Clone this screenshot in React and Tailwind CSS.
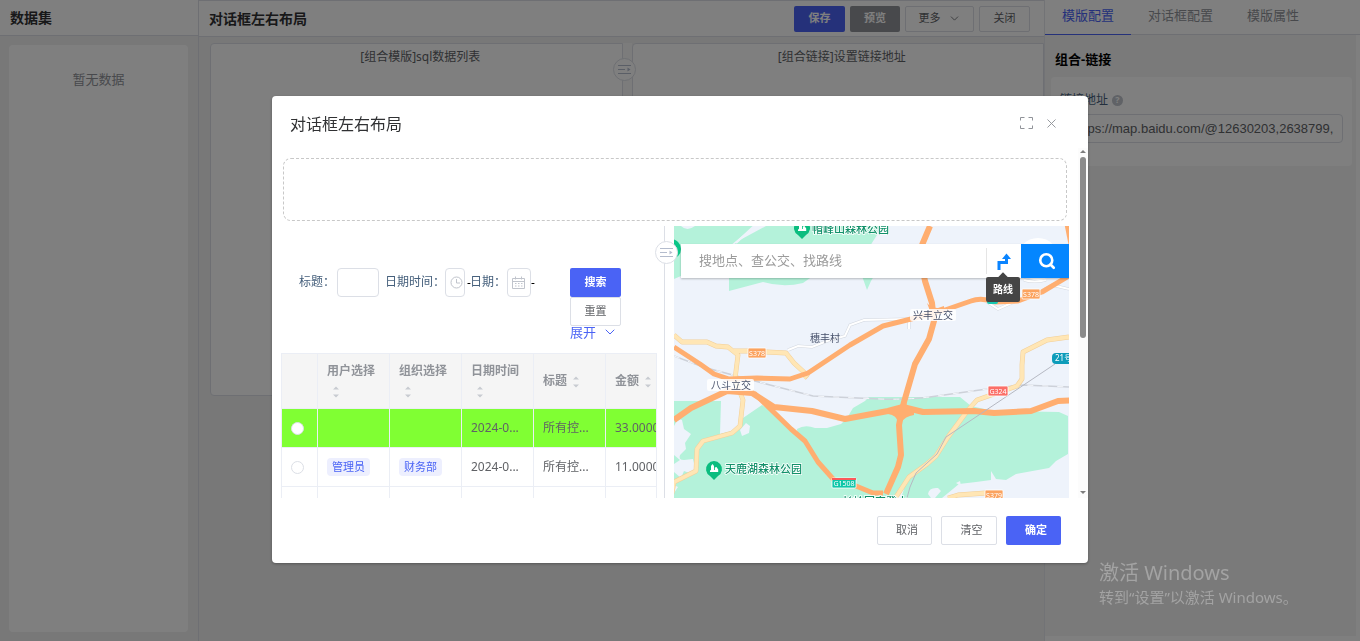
import React, { useState } from "react";
import { ChevronDown, Search, X } from "lucide-react";

const tabs = ["模版配置", "对话框配置", "模版属性"];

const columns = ["用户选择", "组织选择", "日期时间", "标题", "金额"];

const rows = [
  { id: 1, user: "", org: "", date: "2024-0...", title: "所有控...", amount: "33.0000", active: true },
  { id: 2, user: "管理员", org: "财务部", date: "2024-0...", title: "所有控...", amount: "11.0000" },
  { id: 3, user: "", org: "", date: "", title: "", amount: "" },
];

function SplitToggle() {
  return (
    <button
      aria-label="折叠"
      className="absolute top-[15px] -left-[10px] z-10 flex size-[23px] items-center justify-center rounded-full border border-[#dcdfe6] bg-white"
    >
      <svg width="13" height="11" viewBox="0 0 13 11" fill="none" stroke="#b4bccd">
        <path d="M0 1.500h13M0 5.500h7M0 9.500h13" />
        <path d="M9.500 3.500v4L12.500 5.500z" fill="#b4bccd" stroke="none" />
      </svg>
    </button>
  );
}

function SortCaret() {
  return (
    <span className="inline-flex h-5 w-[18px] items-center justify-center align-middle">
      <svg width="6" height="12" viewBox="0 0 6 12" fill="#c8cbd1">
        <path d="M0 3.500 3 0.500l3 3zM0 8.500h6l-3 3z" />
      </svg>
    </span>
  );
}

function ClockIcon() {
  return (
    <svg width="13" height="13" viewBox="0 0 13 13" fill="none" stroke="#c0c4cc">
      <circle cx="6.5" cy="6.5" r="5.500" />
      <path d="M6.500 3v4H10" />
    </svg>
  );
}

function CalendarIcon() {
  return (
    <svg width="13" height="13" viewBox="0 0 13 13" fill="none" stroke="#c0c4cc">
      <path d="M.5 2.500h12v10H.5zM.5 5.500h12M3.500.5v3M9.500.5v3M3 7.500h1.500M6 7.500h1.500M9 7.500h1.500M3 10h1.500M6 10h1.500M9 10h1.500" />
    </svg>
  );
}

function Shield({ x, y, w, fill, children }) {
  return (
    <g>
      <rect x={x} y={y} width={w} height="10" rx="1" fill={fill} stroke="#fff" strokeWidth="0.8" />
      <text x={x + w / 2} y={y + 7.6} fontSize="7" fill="#fff" textAnchor="middle">
        {children}
      </text>
    </g>
  );
}

function Pin({ x, y }) {
  return (
    <g transform={`translate(${x} ${y})`}>
      <path d="M0 11 -4 7A8 8 0 1 1 4 7z" fill="#0bbd7f" />
      <path d="M-4 3V1.500l1-.5v-4l1.500-2L0-3v4h.8v-2.500L2.500-2 4.200.5V3z" fill="#fff" />
    </g>
  );
}

const streets =
  "m114 124 10-4 14 1 15-6 18-5 5-11 14-5 45-1M235 93v10M313 76l11 7 16-7M364 67l14-8 17 4M350 54q10 3 22 0";

const rail = "m0 130 29 11 67 18 43 11 67 3q30 1 57-3l50-7 36-4 46 2";

const yellowRoads =
  "m0 109 8 7h25l9 4 12 1 10 8-3 24 8 21-3 26-8 7-29 8-6 8-1 22-22 11-2 11-4 10M60 125l14 0 38 2 8 10 13 12-3 3M395 111l-22 3-24 12-1 13 0 14-5 7-40 14-9 10-20 27-12 19-9 8-18 13-13 20M274 272l10-3 28-2";

function MapCanvas() {
  return (
    <svg className="block h-full w-full" viewBox="0 0 395 272" preserveAspectRatio="xMinYMin slice" fill="none">
      <rect width="395" height="272" fill="#eef3fb" />

      {/* parks */}
      <g fill="#b4f2da">
        <path d="M0 0h7q6 6 14 0h59L56 20H7v30L0 53zM58 20 66 14 92 0h112l-1 9-7 11z" />
        <path d="M55 50v15l34-9q20 6 40 1l10-7zM188 50l5 14 4-9 3-5z" />
        <path d="M0 175h47l-1 33 20-5 3-11 19-13 16 10 20 22-1-8q8-5 18-1h12l14-4 6-6 6-10 12-7 4-4h91l11 9 22 5 66 1 9 4v38l-12 7-7 7-33 6-10 6-10-1-5-8v9l-15 2-17 2-17 14H0z" />
      </g>
      <g fill="#eef3fb">
        <path d="M0 200q4-8 8-6l2 9 7 5-6 9 1 6-6 6q-2 5 4 5l9-1 2 9-3 6-8-3-3 7-7-6v-8l6-4-6-5zM66 204l6-7 4 3-1 7-7 3zM0 259l4 2-4 6z" />
        <path d="M222 272l4-10 4 1-3 9zM254 268q1-7 10-6l3 3-6 7h-4zM282 257l4-2 1 5z" />
      </g>

      {/* small streets and railway */}
      <path d={streets} stroke="#d2d7df" strokeWidth="3" />
      <path d={streets} stroke="#fff" strokeWidth="2" />
      <path d="M62 17 80 0" stroke="#eef3fb" strokeWidth="2" />
      <path d={rail} stroke="#cdd1d9" strokeWidth="1.500" />
      <path d={rail} stroke="#f4f6fa" strokeWidth="1" strokeDasharray="6 9" />

      {/* yellow roads */}
      <path d={yellowRoads} stroke="#f2cf98" strokeWidth="4.800" strokeLinejoin="round" />
      <path d={yellowRoads} stroke="#ffe6b5" strokeWidth="3.800" strokeLinejoin="round" />

      {/* highways */}
      <g stroke="#ffae70" strokeLinejoin="round">
        <path strokeWidth="5" d="m0 121 26 17 14 10 15 5 28-1 33 1 18-6 42-28 33-19 28-7 34-9 26-9q10-4 24 1l23-1 24-9 30-18" />
        <path strokeWidth="6" d="m0 194 17-12 36-17 25 2 22 14 38 4 33 8 43-8 15-4 20 5 51-1 20 2 37-2 27-10 46-2" />
        <path strokeWidth="5" d="m80 167 37 36 14 12 13 21 16 18 22 6 17 7h10" />
        <path strokeWidth="6" d="m212 268 12-27 3-12-2-30 3-15 2-8 11-38 14-25 5-18-2-18-7-22-2-10M248 19l8-19" />
        <path strokeWidth="5" d="m393-2 4 20" />
      </g>
      <path d="M217 183q8-1 12-7h3q0 6 8 7v6q-9 1-13 8h-3q-1-8-10-9z" fill="#ffae70" />
      <path d="M253 77q4 5 11 5l6-2v5l-12 5z" fill="#ffae70" />
      <path d="m381 138-109 73-9 17-21 19-6 14-3 11" stroke="#b5b8c2" strokeWidth="1" />

      <circle cx="364" cy="33" r="21" fill="#fff" />
      <rect x="313" y="70" width="11" height="8" rx="2" fill="#17c7b1" />
      <circle cx="-3" cy="23" r="10" fill="#0ac687" />

      {/* labels */}
      <Pin x={128} y={2} />
      <Pin x={40} y={243} />
      <rect x="236" y="83" width="46" height="12" rx="2" fill="#fff" fillOpacity="0.85" />
      <rect x="33" y="153" width="47" height="12" rx="2" fill="#fff" fillOpacity="0.85" />
      <g fontSize="10" fill="#46506a" textAnchor="middle">
        <text x="151" y="116">穗丰村</text>
        <text x="259" y="93">兴丰立交</text>
        <text x="57" y="163">八斗立交</text>
      </g>
      <g fontSize="11" fontWeight="500" fill="#12916a" stroke="#fff" strokeWidth="1.500" paintOrder="stroke">
        <text x="138" y="7">帽峰山森林公园</text>
        <text x="51" y="247">天鹿湖森林公园</text>
        <text x="168" y="280">长岭国家登山</text>
      </g>

      <Shield x={74} y={122} w={18} fill="#fba35f">S378</Shield>
      <Shield x={348} y={63} w={18} fill="#fba35f">S378</Shield>
      <Shield x={314} y={160} w={20} fill="#fb6f68">G324</Shield>
      <Shield x={311} y={264} w={18} fill="#fba35f">S379</Shield>
      <Shield x={158} y={252} w={24} fill="#0fc7a8">G1508</Shield>
      <path d="M158 252h24v2h-24z" fill="#fb5a5a" />
      <rect x="378" y="127" width="26" height="11" rx="4" fill="#0d9cba" />
      <text x="381" y="135" fontSize="8" fill="#fff">21号</text>
    </svg>
  );
}

function MapPanel() {
  return (
    <div className="relative min-w-0 flex-1 overflow-hidden">
      <MapCanvas />
      <div className="absolute top-[18px] right-0 left-[7px] flex h-[34px] bg-white shadow-[0_1px_2px_rgba(0,0,0,0.25)]">
        <input
          aria-label="搜索地图"
          placeholder="搜地点、查公交、找路线"
          className="min-w-0 flex-1 pl-[18px] text-[13px] placeholder:text-[#9b9b9b] focus:outline-none"
        />
        <button aria-label="路线" className="my-1 flex w-[35px] items-center justify-center border-l border-[#e5e5e5]">
          <svg width="14" height="17" viewBox="0 0 14 17" fill="none">
            <path d="M2 17V9.500h7.500V4" stroke="#0a84ff" strokeWidth="3" />
            <path d="M5 6 9.500.5 14 6z" fill="#0a84ff" />
          </svg>
        </button>
        <button aria-label="搜索" className="flex w-12 items-center justify-center bg-[#0486ff] pl-1 text-white">
          <Search size={18} strokeWidth={3.5} />
        </button>
      </div>
      <div className="absolute top-[51px] right-[49px] flex h-[25px] w-[34px] items-center justify-center rounded-xs bg-[#454545] text-[10px] font-bold text-white">
        <span className="absolute -top-[3px] size-2 rotate-45 bg-[#454545]" />
        <span className="relative">路线</span>
      </div>
    </div>
  );
}

function SearchForm() {
  return (
    <form className="flex h-[85px] items-start pl-[18px] text-xs text-[#46607c]">
      <label htmlFor="title" className="w-[38px] leading-[28px]">标题：</label>
      <input id="title" className="h-[29px] w-[42px] rounded-sm border border-[#dcdfe6] px-2" />

      <label htmlFor="datetime" className="ml-[6px] w-[60px] leading-[28px]">日期时间：</label>
      <div className="relative">
        <input id="datetime" className="h-[29px] w-5 rounded-sm border border-[#dcdfe6]" />
        <span className="pointer-events-none absolute top-2 left-[5px]"><ClockIcon /></span>
      </div>
      <span className="w-[5px] pl-[2px] leading-[29px] text-black">-</span>

      <label htmlFor="date" className="w-[37px] leading-[28px]">日期：</label>
      <div className="relative">
        <input id="date" className="h-[29px] w-6 rounded-sm border border-[#dcdfe6]" />
        <span className="pointer-events-none absolute top-2 left-[5px]"><CalendarIcon /></span>
      </div>
      <span className="leading-[29px] text-black">-</span>

      <div className="mr-[43px] ml-auto flex w-[51px] flex-col">
        <button type="button" className="h-[29px] rounded-xs bg-[#4a63f5] text-[11px] font-bold text-white">搜索</button>
        <button type="button" className="h-[29px] rounded-xs border border-[#dcdfe6] bg-white text-[11px] text-[#606266]">重置</button>
        <button type="button" className="flex h-3 items-center gap-[6px] text-[13px] leading-3 text-[#4a63f5]">
          展开 <ChevronDown size={16} strokeWidth={1.5} className="shrink-0" />
        </button>
      </div>
    </form>
  );
}

function DataTable() {
  const [selected, setSelected] = useState(null);

  return (
    <div className="mr-[7px] overflow-hidden border border-b-0 border-[#ebeef5]">
      <table className="w-[396px] table-fixed border-separate border-spacing-0 text-left text-xs text-[#606266]">
        <thead>
          <tr className="h-[55px] bg-[#f5f5f5] text-[#909399]">
            <th aria-label="选择" className="w-9 border-r border-b border-[#ebeef5]" />
            {columns.map((col) => (
              <th key={col} className="w-[72px] border-r border-b border-[#ebeef5] px-[9px] py-0 leading-5 font-bold">
                {col}
                <SortCaret />
              </th>
            ))}
          </tr>
        </thead>
        <tbody>
          {rows.map((row) => (
            <tr
              key={row.id}
              className={`h-[39px] *:border-r *:border-b *:border-[#ebeef5] *:p-0 *:pl-[9px] *:whitespace-nowrap ${row.active ? "bg-[#80ff33]" : "bg-white"}`}
            >
              <td>
                {row.date && (
                  <input
                    type="radio"
                    name="row"
                    aria-label={`选择第${row.id}行`}
                    checked={selected === row.id}
                    onChange={() => setSelected(row.id)}
                    className="block size-[13px] appearance-none rounded-full border border-[#dcdfe6] bg-white checked:border-4 checked:border-[#4a63f5]"
                  />
                )}
              </td>
              <td>{row.user && <Tag>{row.user}</Tag>}</td>
              <td>{row.org && <Tag>{row.org}</Tag>}</td>
              <td>{row.date}</td>
              <td>{row.title}</td>
              <td>{row.amount}</td>
            </tr>
          ))}
        </tbody>
      </table>
    </div>
  );
}

function Tag({ children }) {
  return (
    <span className="inline-block h-[18px] rounded bg-[#edeffe] px-[5px] text-[11px] leading-[18px] text-[#4a63f5]">
      {children}
    </span>
  );
}

function Dialog() {
  return (
    <div
      role="dialog"
      aria-label="对话框左右布局"
      className="mx-auto mt-[15vh] w-3/5 overflow-hidden rounded-sm bg-white shadow-[0_1px_3px_rgba(0,0,0,0.3)]"
    >
      <header className="flex h-[52px] items-center pt-[2px] pr-[29px] pl-[18px] text-[#909399]">
        <h2 className="mr-auto pt-[2px] text-base text-[#303133]">对话框左右布局</h2>
        <button aria-label="全屏" className="mr-[11px]">
          <svg width="13" height="12" viewBox="0 0 13 12" fill="none" stroke="currentColor">
            <path d="M4.500.5h-4v3M8.500.5h4v3M4.500 11.500h-4v-3M8.500 11.500h4v-3" />
          </svg>
        </button>
        <button aria-label="关闭">
          <X size={15} strokeWidth={1.5} />
        </button>
      </header>

      <div className="flex h-[350px] overflow-hidden">
        <div className="min-w-0 flex-1 pt-[10px] pr-[9px] pl-[9px]">
          <div className="mr-[2px] ml-[2px] h-[63px] rounded-lg border border-dashed border-[#c8c8c8]" />
          <div className="mt-[5px] flex h-[272px]">
            <div className="w-[383px] min-w-0 overflow-hidden pt-[42px]">
              <SearchForm />
              <DataTable />
            </div>
            <div className="relative w-[10px] border-l border-[#dcdfe6]">
              <SplitToggle />
            </div>
            <MapPanel />
          </div>
        </div>
        {/* scrollbar */}
        <div className="flex w-[10px] flex-col items-center bg-[#fcfcfc] py-[2px]">
          <svg width="6" height="3" viewBox="0 0 6 3" fill="#7d7d7d"><path d="M0 3h6L3 0z" /></svg>
          <div className="mt-1 h-[181px] w-[6px] rounded-full bg-[#8b8b8b]" />
          <svg className="mt-auto mb-[2px]" width="6" height="3" viewBox="0 0 6 3" fill="#7d7d7d"><path d="M0 0h6L3 3z" /></svg>
        </div>
      </div>

      <footer className="flex h-[65px] items-start justify-end gap-[9px] pt-[18px] pr-[27px] text-[11px]">
        <button className="h-[29px] w-[55px] rounded-xs border border-[#dcdfe6] pl-[5px] text-[#606266]">取消</button>
        <button className="h-[29px] w-14 rounded-xs border border-[#dcdfe6] pl-[5px] text-[#606266]">清空</button>
        <button className="h-[29px] w-[55px] rounded-xs bg-[#4a63f5] pl-[5px] font-bold text-white">确定</button>
      </footer>
    </div>
  );
}

export default function App() {
  const [tab, setTab] = useState(tabs[0]);

  return (
    <div className="flex h-screen overflow-hidden bg-[#f1f1f1] font-['Noto_Sans','Noto_Sans_CJK_SC',sans-serif] text-[#606266]">
      <aside className="flex w-[198px] shrink-0 flex-col">
        <h2 className="h-9 border-b border-[#dcdfe6] bg-white pl-[10px] text-sm leading-[35px] font-bold text-[#303133]">数据集</h2>
        <div className="m-[9px] mr-[10px] flex-1 rounded-sm bg-white pt-6 text-center text-[13px] leading-5 text-[#909399]">
          暂无数据
        </div>
      </aside>

      <main className="flex min-w-0 flex-1 flex-col border-l border-[#dcdfe6]">
        <header className="flex h-[37px] items-center border-y border-[#dcdfe6] bg-white pr-[14px] pl-[10px] text-[11px]">
          <h1 className="mr-auto text-sm font-bold text-[#303133]">对话框左右布局</h1>
          <div className="flex gap-[5px]">
            <button className="h-[26px] w-[51px] rounded-xs bg-[#4a63f5] font-bold text-white">保存</button>
            <button className="h-[26px] w-[50px] rounded-xs bg-[#909399] font-bold text-white">预览</button>
            <button className="flex h-[26px] w-[69px] items-center justify-center gap-[7px] rounded-xs border border-[#dcdfe6]">
              更多 <ChevronDown size={13} strokeWidth={1.5} />
            </button>
            <button className="h-[26px] w-[51px] rounded-xs border border-[#dcdfe6]">关闭</button>
          </div>
        </header>
        <div className="mt-[6px] flex h-[353px] pl-[11px] text-center text-xs leading-[26px]">
          <section className="flex-1 rounded-l-sm border border-[#dcdfe6] bg-white pl-2">[组合模版]sql数据列表</section>
          <div className="relative w-[9px] bg-[#f8f8f8]">
            <SplitToggle />
          </div>
          <section className="flex-1 rounded-l-sm border border-[#dcdfe6] bg-white pl-2">[组合链接]设置链接地址</section>
        </div>
      </main>

      <aside className="flex w-[316px] shrink-0 flex-col border-l border-[#e4e7ed] text-[13px]">
        <nav className="flex h-[35px] border-b border-[#dcdfe6] bg-white">
          {tabs.map((name) => (
            <button
              key={name}
              onClick={() => setTab(name)}
              className={`-mb-px border-b px-[17px] pb-[2px] ${tab === name ? "border-[#4a63f5] text-[#4a63f5]" : "border-transparent text-[#909399]"}`}
            >
              {name}
            </button>
          ))}
        </nav>
        <div className="flex-1 border-r-4 border-white bg-[#f5f5f5] pr-1 pl-[6px]">
          <h3 className="pt-[14px] pl-1 leading-5 font-bold text-black">组合-链接</h3>
          <div className="mt-2 h-[89px] rounded-sm bg-white px-[9px] pt-[13px]">
            <div className="flex items-center gap-1 text-xs leading-5 text-[#46607c]">
              <label htmlFor="url">链接地址</label>
              <span className="flex size-[11px] items-center justify-center rounded-full bg-[#c0c4cc] text-[9px] font-bold text-white">?</span>
            </div>
            <input
              id="url"
              defaultValue="https://map.baidu.com/@12630203,2638799,13z"
              className="mt-1 h-[29px] w-full rounded-sm border border-[#dcdfe6] bg-white pr-2 pl-3 font-['Liberation_Sans',sans-serif] text-[13px]"
            />
          </div>
        </div>
        <div className="h-[5px] bg-white" />
      </aside>

      <div className="fixed inset-0 z-20 bg-black/50">
        <Dialog />
      </div>

      <div className="pointer-events-none fixed right-[60px] bottom-[34px] z-30 w-[201px] whitespace-nowrap text-[#a3a3a3]">
        <p className="text-xl leading-7">激活 Windows</p>
        <p className="text-[15px] leading-5">转到“设置”以激活 Windows。</p>
      </div>
    </div>
  );
}
